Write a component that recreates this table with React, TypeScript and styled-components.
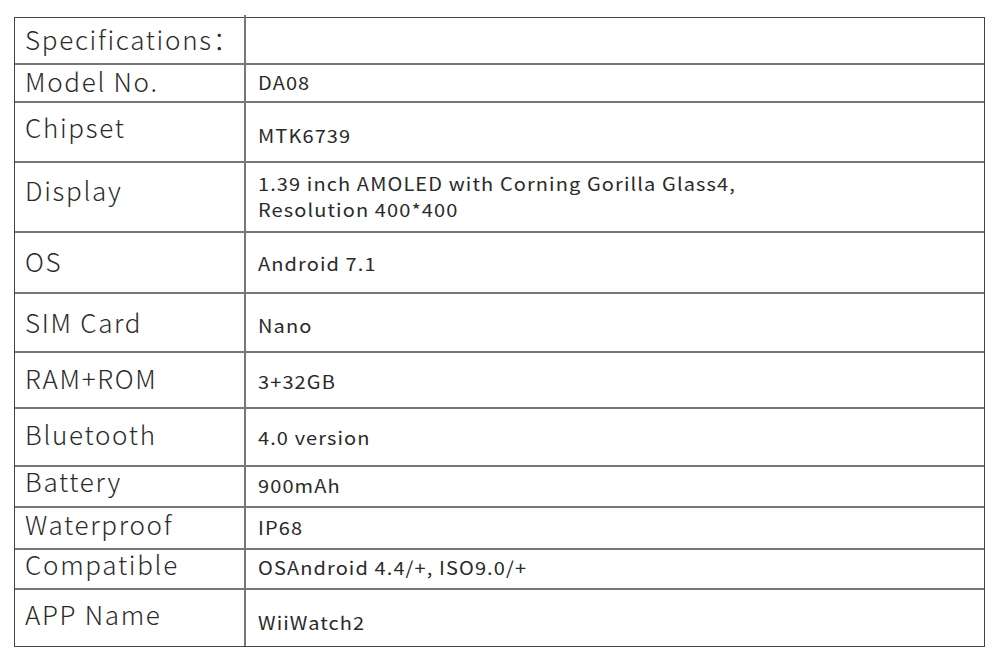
import React from 'react'
import styled, { createGlobalStyle } from 'styled-components'

const GlobalStyle = createGlobalStyle`
  html, body {
    margin: 0;
    padding: 0;
    background: #fff;
  }
  body {
    width: 1000px;
    height: 668px;
    overflow: hidden;
    font-family: "Noto Sans CJK SC", "Noto Sans", sans-serif;
  }
`

const Page = styled.div`
  padding: 17px 0 0 14px;
`

const Table = styled.div`
  width: 971px;
  border: 1px solid #444;
  box-sizing: border-box;
  display: flex;
  flex-direction: column;
`

const Row = styled.div<{ $h: number; $first?: boolean }>`
  display: grid;
  grid-template-columns: 231px 1fr;
  grid-template-rows: 100%;
  height: ${(p) => p.$h}px;
  box-sizing: border-box;
  border-top: ${(p) => (p.$first ? 'none' : '2px solid #777')};
`

// shift > 0 moves the text up, shift < 0 moves it down (by half the value)
const pad = (shift: number) =>
  `${Math.max(-shift, 0)}px 0 ${Math.max(shift, 0)}px`

const Label = styled.div<{ $first?: boolean; $shift: number }>`
  position: relative;
  min-height: 0;
  display: flex;
  align-items: center;
  padding: ${(p) => pad(p.$shift)} 10px;
  border-right: 2px solid #777;
  font-size: 26px;
  line-height: 30px;
  font-weight: 300;
  color: #2b2b2b;
  letter-spacing: 1.7px;
  white-space: nowrap;

  &::before {
    content: '';
    display: ${(p) => (p.$first ? 'block' : 'none')};
    position: absolute;
    right: -2px;
    top: -3px;
    width: 2px;
    height: 3px;
    background: #777;
  }
`

const Value = styled.div<{ $shift: number }>`
  min-height: 0;
  display: flex;
  flex-direction: column;
  justify-content: center;
  padding: ${(p) => pad(p.$shift)} 12px;
  font-size: 18px;
  line-height: 26px;
  color: #2a2a2a;
`

const Line = styled.span`
  display: block;
  width: max-content;
  white-space: nowrap;
  letter-spacing: 1px;
  transform: scaleX(1.11);
  transform-origin: left center;
`

const specs: { label: string; value: string[]; h: number; v: number; l: number }[] = [
  { label: 'Specifications：', value: [], h: 45, v: 0, l: 4 },
  { label: 'Model No.', value: ['DA08'], h: 38, v: 2, l: 4 },
  { label: 'Chipset', value: ['MTK6739'], h: 60, v: -6, l: 10 },
  {
    label: 'Display',
    value: ['1.39 inch AMOLED with Corning Gorilla Glass4,', 'Resolution 400*400'],
    h: 70,
    v: 2,
    l: 14,
  },
  { label: 'OS', value: ['Android 7.1'], h: 61, v: 0, l: 4 },
  { label: 'SIM Card', value: ['Nano'], h: 59, v: -4, l: 2 },
  { label: 'RAM+ROM', value: ['3+32GB'], h: 56, v: -2, l: 4 },
  { label: 'Bluetooth', value: ['4.0 version'], h: 58, v: 0, l: 6 },
  { label: 'Battery', value: ['900mAh'], h: 41, v: 4, l: 12 },
  { label: 'Waterproof', value: ['IP68'], h: 42, v: 2, l: 8 },
  { label: 'Compatible', value: ['OSAndroid 4.4/+, ISO9.0/+'], h: 40, v: 4, l: 10 },
  { label: 'APP Name', value: ['WiiWatch2'], h: 58, v: -8, l: 8 },
]

const App = () => (
  <>
    <GlobalStyle />
    <Page>
      <Table>
        {specs.map((s, i) => (
          <Row key={s.label} $h={s.h} $first={i === 0}>
            <Label $first={i === 0} $shift={s.l}>
              {s.label}
            </Label>
            <Value $shift={s.v}>
              {s.value.map((line) => (
                <Line key={line}>{line}</Line>
              ))}
            </Value>
          </Row>
        ))}
      </Table>
    </Page>
  </>
)

export default App
